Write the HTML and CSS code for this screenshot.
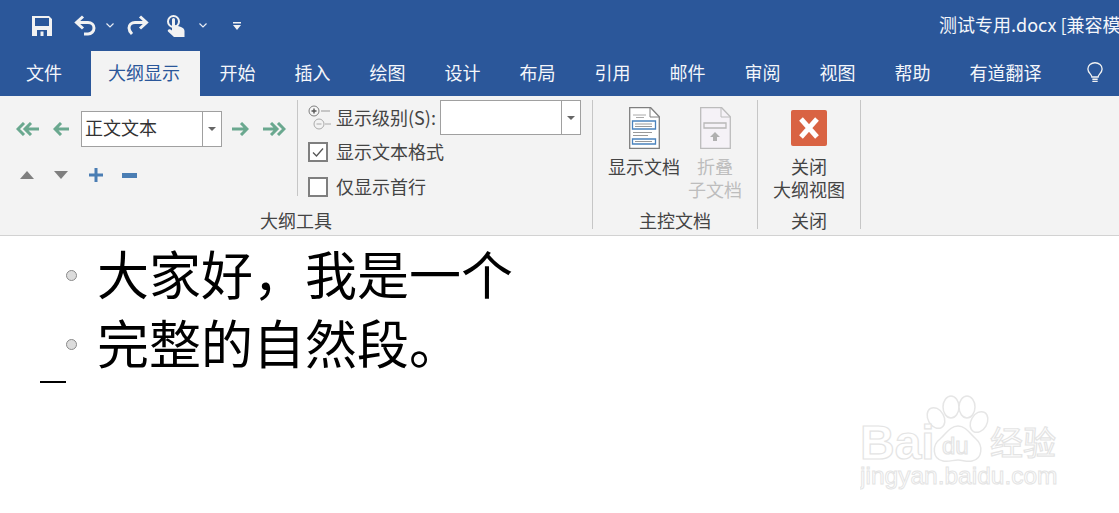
FILE: index.html
```html
<!DOCTYPE html>
<html lang="zh">
<head>
<meta charset="utf-8">
<title>测试专用.docx</title>
<link rel="stylesheet" href="styles.css">
</head>
<body>
<header class="titlebar">
  <div class="qat">
    <svg class="qi save" width="20" height="20" viewBox="0 0 20 20"><path fill="#f2f2f2" fill-rule="evenodd" d="M0 0h17l3 3v17H0zM3 2v8h14V2zM5 14v6h10v-6zM8.500 15.500h3v4.500h-3z"/></svg>
    <svg class="qi undo" width="22" height="21" viewBox="0 0 22 21"><path fill="none" stroke="#f2f2f2" stroke-width="3" d="M9 1.500 2.500 7.500 9 13.500M3 7.500h11c3.500 0 6 2.500 6 5.500s-2.500 6-6 6h-4"/></svg>
    <svg class="qi chev1" width="8" height="5" viewBox="0 0 8 5"><path fill="none" stroke="#e8ecf4" stroke-width="1.200" d="M.5.500 4 4 7.500.500"/></svg>
    <svg class="qi redo" width="22" height="21" viewBox="0 0 22 21"><path fill="none" stroke="#f2f2f2" stroke-width="3" d="M13 1.500 19.500 7.500 13 13.500M19 7.500H8C4.500 7.500 2 10 2 13s1.500 4.500 3 6"/></svg>
    <svg class="qi touch" width="18" height="22" viewBox="0 0 18 22"><circle cx="6.500" cy="6.500" r="5.500" fill="none" stroke="#f2f2f2" stroke-width="2"/><path fill="#f2f2f2" d="M5 4.500a1.500 1.500 0 0 1 3 0V10l6 2c2 .7 3.500 2 3.500 4v6H7L1 16.500c-1-1.500 1-3 2.500-2L5 15.500z"/></svg>
    <svg class="qi chev2" width="8" height="5" viewBox="0 0 8 5"><path fill="none" stroke="#e8ecf4" stroke-width="1.200" d="M.5.500 4 4 7.500.500"/></svg>
    <svg class="qi more" width="8" height="8" viewBox="0 0 8 8"><path fill="#f2f2f2" d="M0 0h8v1.500H0zM0 3h8L4 8z"/></svg>
  </div>
  <div class="doc-title">测试专用.docx [兼容模式] - Word</div>
</header>

<nav class="tabs">
  <span class="tab">文件</span>
  <span class="tab active">大纲显示</span>
  <span class="tab">开始</span>
  <span class="tab">插入</span>
  <span class="tab">绘图</span>
  <span class="tab">设计</span>
  <span class="tab">布局</span>
  <span class="tab">引用</span>
  <span class="tab">邮件</span>
  <span class="tab">审阅</span>
  <span class="tab">视图</span>
  <span class="tab">帮助</span>
  <span class="tab">有道翻译</span>
  <svg class="bulb" width="18" height="24" viewBox="0 0 18 24"><path fill="none" stroke="#f2f2f2" stroke-width="1.500" d="M5.500 16.500c0-3-4.500-4.500-4.500-9a8 7 0 0 1 16 0c0 4.500-4.500 6-4.500 9zM6 19h6M6 21.500h6"/></svg>
</nav>

<section class="ribbon">
  <div class="group g-outline">
    <div class="group-body outline-body">
      <div class="levels">
        <div class="lv-row">
          <svg class="ar a1" width="23" height="14" viewBox="0 0 23 14"><path fill="none" stroke="#6aa88f" stroke-width="3" d="M8 1 2 7l6 6M15 1 9 7l6 6M10 7h13"/></svg>
          <svg class="ar a2" width="16" height="14" viewBox="0 0 16 14"><path fill="none" stroke="#6aa88f" stroke-width="3" d="M8 1 2 7l6 6M2 7h14"/></svg>
          <div class="combo c-style"><span class="combo-text">正文文本</span><span class="combo-btn"><i class="caret"></i></span></div>
          <svg class="ar a3" width="17" height="14" viewBox="0 0 17 14"><path fill="none" stroke="#6aa88f" stroke-width="3" d="M9 1l6 6-6 6M15 7H0"/></svg>
          <svg class="ar a4" width="23" height="14" viewBox="0 0 23 14"><path fill="none" stroke="#6aa88f" stroke-width="3" d="M8 1l6 6-6 6M15 1l6 6-6 6M13 7H0"/></svg>
        </div>
        <div class="mv-row">
          <svg width="14" height="8" viewBox="0 0 14 8"><path fill="#7f7f7f" d="M7 0l7 8H0z"/></svg>
          <svg width="14" height="8" viewBox="0 0 14 8"><path fill="#7f7f7f" d="M0 0h14L7 8z"/></svg>
          <svg width="14" height="14" viewBox="0 0 14 14"><path fill="#4a7db3" d="M5.500 0h3v5.500H14v3H8.500V14h-3V8.500H0v-3h5.500z"/></svg>
          <svg width="15" height="5" viewBox="0 0 15 5"><path fill="#4a7db3" d="M0 0h15v5H0z"/></svg>
        </div>
      </div>
      <div class="options">
        <div class="opt-row first">
          <svg class="lvl-icon" width="24" height="25" viewBox="0 0 24 25"><g fill="none" stroke="#7f7f7f"><circle cx="6" cy="6" r="5" fill="#f6f6f6"/><path d="M3.500 6h5M6 3.500v5" stroke-width="1.400" stroke="#555"/><path d="M13 6h9" stroke="#999"/><circle cx="11" cy="19" r="5" stroke="#aaa"/><path d="M8.500 19h5M17 19h6" stroke="#aaa"/></g></svg>
          <span class="opt-label">显示级别(S):</span>
          <div class="combo c-level"><span class="combo-text"></span><span class="combo-btn"><i class="caret"></i></span></div>
        </div>
        <label class="opt-row check-row">
          <svg class="chk" width="20" height="20" viewBox="0 0 20 20"><path fill="#fff" stroke="#7f7f7f" stroke-width="2" d="M1 1h18v18H1z"/><path fill="none" stroke="#555" stroke-width="1.300" d="M5 10.500l3.500 3.500L15 6.500"/></svg>
          <span class="opt-label">显示文本格式</span>
        </label>
        <label class="opt-row check-row last">
          <svg class="chk" width="20" height="20" viewBox="0 0 20 20"><path fill="#fff" stroke="#7f7f7f" stroke-width="2" d="M1 1h18v18H1z"/></svg>
          <span class="opt-label">仅显示首行</span>
        </label>
      </div>
    </div>
    <div class="group-label">大纲工具</div>
  </div>

  <div class="group g-master">
    <div class="group-body btns">
      <div class="rbtn b-show">
        <svg width="31" height="42" viewBox="0 0 31 42"><path fill="#fff" stroke="#7f7f7f" stroke-width="1.300" d="M.7.700h21l8.600 9v31.600H.7z"/><path fill="none" stroke="#7f7f7f" d="M21 1v9h9"/><path stroke="#aaa" d="M4 8h13M7 10.500h8"/><path fill="#fff" stroke="#4a82bd" stroke-width="1.300" d="M3.500 14h23v8h-23zM3.500 32h23v5h-23z"/><path stroke="#999" d="M6 17h17M6 19.500h17M4 25.500h19M4 28.500h15M6 34.500h17"/></svg>
        <span class="rbtn-text">显示文档</span>
      </div>
      <div class="rbtn b-fold disabled">
        <svg width="31" height="42" viewBox="0 0 31 42"><path fill="#f5f2f7" stroke="#bcbcbc" stroke-width="1.300" d="M.7.700h21l8.600 9v31.600H.7z"/><path fill="none" stroke="#bcbcbc" d="M21 1v9h9"/><path fill="none" stroke="#b8b8b8" stroke-width="1.300" d="M4 16h22v5H4z"/><path fill="#b0b0b0" d="M15 25l5 5h-3v4h-4v-4h-3z"/></svg>
        <span class="rbtn-text">折叠<br>子文档</span>
      </div>
    </div>
    <div class="group-label">主控文档</div>
  </div>

  <div class="group g-close">
    <div class="group-body btns">
      <div class="rbtn b-close">
        <svg width="36" height="36" viewBox="0 0 36 36"><rect width="36" height="36" rx="2" fill="#d96343"/><path fill="none" stroke="#fff" stroke-width="5" d="M10 9l16 18M26 9 10 27"/></svg>
        <span class="rbtn-text">关闭<br>大纲视图</span>
      </div>
    </div>
    <div class="group-label">关闭</div>
  </div>
</section>

<main class="page">
  <p class="para"><i class="bullet"></i>大家好，我是一个</p>
  <p class="para"><i class="bullet"></i>完整的自然段。</p>
  <div class="cursor"></div>
  <svg class="watermark" width="210" height="105" viewBox="0 0 210 105">
    <g class="wm-shape">
      <ellipse cx="76" cy="25" rx="8" ry="11" transform="rotate(-30 76 25)"/>
      <ellipse cx="91" cy="14" rx="8" ry="11"/>
      <ellipse cx="107" cy="14" rx="8" ry="11"/>
      <ellipse cx="119" cy="29" rx="8" ry="11" transform="rotate(30 119 29)"/>
      <path d="M98 33c8 0 12 8 18 13 7 6 7 20-4 22-6 1-9-1-14-1s-9 2-15 1c-11-2-11-16-3-22 6-5 10-13 18-13z"/>
    </g>
    <text class="wm wm-bai" x="0" y="66">Bai</text>
    <text class="wm wm-du" x="82" y="61">du</text>
    <text class="wm wm-cn" x="130" y="62">经验</text>
    <text class="wm wm-url" x="0" y="91">jingyan.baidu.com</text>
  </svg>
</main>
</body>
</html>
```
FILE: styles.css
```css
* { box-sizing: border-box; }
html, body { margin: 0; padding: 0; }
body {
  width: 1119px;
  height: 513px;
  overflow: hidden;
  background: #fff;
  font-family: "Noto Sans CJK SC", "Noto Sans", sans-serif;
  font-size: 18px;
  color: #444;
}
.titlebar {
  height: 51px;
  background: #2b579a;
  display: flex;
  align-items: center;
  color: #fff;
}
.qat {
  width: 939px;
  flex: none;
  display: flex;
  align-items: center;
  padding-left: 32px;
}
.qi { flex: none; }
.undo { margin-left: 22px; }
.chev1 { margin-left: 10px; }
.redo { margin-left: 13px; }
.touch { margin-left: 18px; }
.chev2 { margin-left: 14px; }
.more { margin-left: 26px; }
.doc-title {
  flex: 1;
  white-space: nowrap;
  overflow: hidden;
  line-height: 24px;
  padding-bottom: 3px;
  color: #f4f6fa;
}
.tabs {
  height: 45px;
  background: #2b579a;
  display: flex;
  align-items: stretch;
  padding-left: 6.5px;
  color: #f4f6fa;
}
.tab {
  padding: 0 19.5px;
  line-height: 43px;
  white-space: nowrap;
}
.tab.active {
  margin-left: 9.5px;
  padding: 0 19px 0 17px;
  width: 109px;
  background: #f3f3f3;
  color: #2b579a;
}
.bulb { margin: 11px 0 0 26px; flex: none; width: 16px; height: 22px; }
.ribbon {
  height: 140px;
  background: #f3f3f3;
  border-bottom: 1px solid #d2d2d2;
  display: flex;
  padding: 4px 0 6px;
}
.group {
  display: flex;
  flex-direction: column;
  border-right: 1px solid #c6c6c6;
}
.g-outline { width: 593px; }
.g-master { width: 165px; }
.g-close { width: 103px; }
.group-body { flex: 1; display: flex; }
.group-label {
  height: 22px;
  margin-bottom: -2px;
  line-height: 22px;
  text-align: center;
}
.levels {
  width: 298px;
  height: 96px;
  border-right: 1px solid #c6c6c6;
  padding-top: 11px;
}
.lv-row { display: flex; align-items: center; padding-left: 16px; }
.a2 { margin-left: 14px; }
.c-style { margin-left: 12px; }
.a3 { margin-left: 10px; }
.a4 { margin-left: 14px; }
.mv-row {
  display: flex;
  align-items: center;
  margin-top: 21px;
  padding-left: 20px;
}
.mv-row svg:nth-child(2) { margin-left: 20px; }
.mv-row svg:nth-child(3) { margin-left: 21px; }
.mv-row svg:nth-child(4) { margin-left: 19px; }
.combo {
  height: 36px;
  width: 141px;
  background: #fff;
  border: 1px solid #a0a0a0;
  display: flex;
  flex: none;
}
.combo-text {
  flex: 1;
  padding-left: 3px;
  line-height: 30px;
  color: #333;
}
.combo-btn {
  width: 19px;
  border-left: 1px solid #a0a0a0;
  display: flex;
  align-items: center;
  justify-content: center;
}
.caret {
  width: 0;
  height: 0;
  border-left: 4px solid transparent;
  border-right: 4px solid transparent;
  border-top: 4px solid #666;
}
.options { padding-left: 10px; }
.opt-row { display: flex; align-items: center; }
.opt-row.first { height: 35px; }
.check-row { height: 20px; margin-top: 7px; }
.check-row.last { margin-top: 15px; }
.lvl-icon { flex: none; margin-right: 4px; }
.chk { flex: none; margin-right: 8px; }
.opt-label { line-height: 24px; padding-bottom: 2px; white-space: nowrap; }
.c-level { margin-left: 4px; height: 35px; }
.btns { justify-content: flex-start; }
.rbtn {
  display: flex;
  flex-direction: column;
  align-items: center;
  text-align: center;
}
.rbtn-text { line-height: 22.5px; display: block; color: #444; }
.b-show { width: 72px; margin-left: 15px; padding-top: 7px; }
.b-show .rbtn-text { margin-top: 6px; }
.b-fold { width: 72px; margin-left: -1px; padding-top: 7px; }
.b-fold .rbtn-text { margin-top: 6px; color: #bdbdbd; }
.b-close { width: 102px; padding-top: 10px; }
.b-close .rbtn-text { margin-top: 9px; }
.page {
  position: relative;
  height: 277px;
  padding: 2px 0 0 97px;
}
.para {
  margin: 0;
  position: relative;
  font-size: 52px;
  line-height: 69px;
  color: #000;
  white-space: nowrap;
}
.bullet {
  position: absolute;
  left: -31px;
  top: 32px;
  width: 11px;
  height: 11px;
  border-radius: 50%;
  background: #dcdcdc;
  border: 1px solid #8a8a8a;
}
.cursor {
  position: absolute;
  left: 40px;
  top: 145px;
  width: 26px;
  height: 2px;
  background: #000;
}
.watermark {
  position: absolute;
  left: 860px;
  top: 157px;
}
.wm-shape { fill: #fff; stroke: #e6e6e6; stroke-width: 1.500; }
.wm {
  fill: #fff;
  stroke: #e4e4e4;
  stroke-width: 1.200;
  font-family: "Liberation Sans", sans-serif;
}
.wm-bai { font-size: 48px; font-weight: 700; }
.wm-du { font-size: 24px; }
.wm-cn { font-size: 33px; font-family: "Noto Sans CJK SC", sans-serif; }
.wm-url { font-size: 24.500px; stroke-width: 1; }
```
